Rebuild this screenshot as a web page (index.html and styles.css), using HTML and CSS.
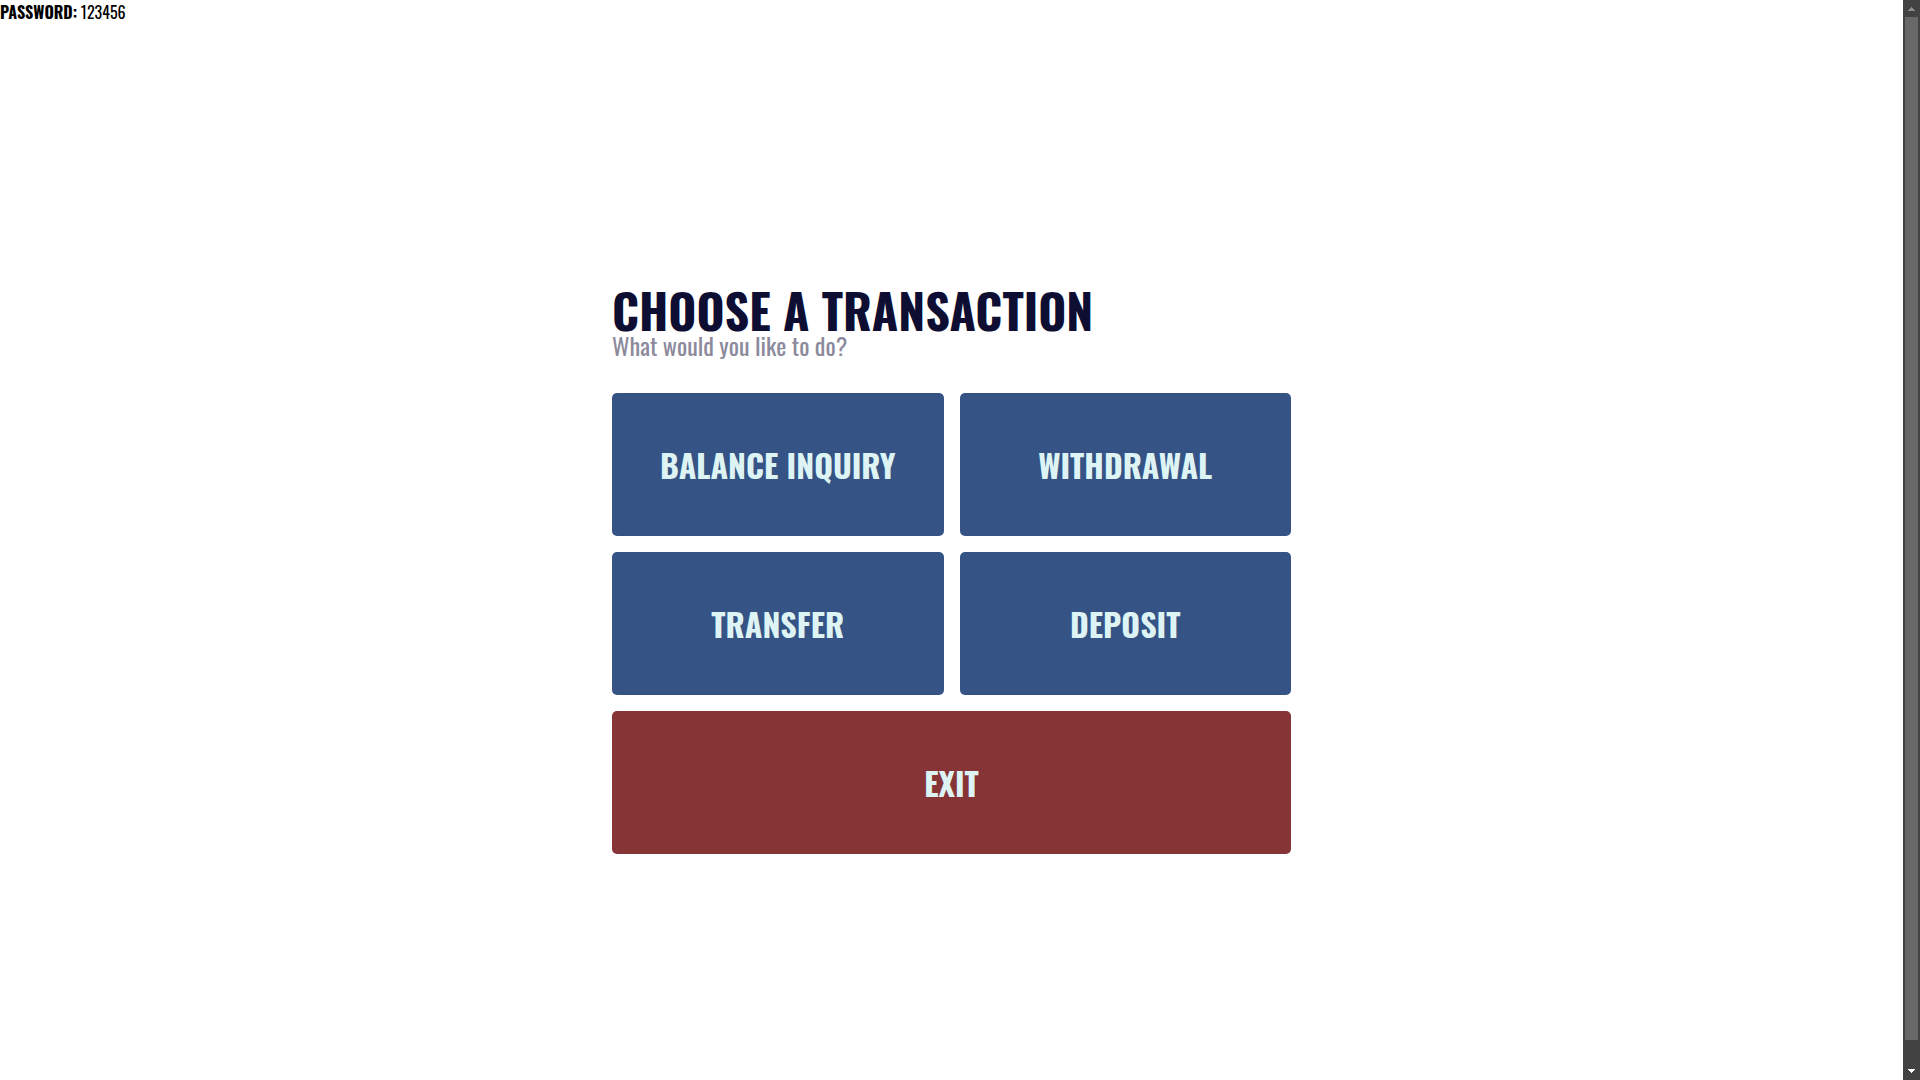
FILE: index.html
```
<!DOCTYPE html>
<html lang="en">
<head>
<meta charset="utf-8">
<title>Choose a transaction</title>
<link rel="stylesheet" href="styles.css">
</head>
<body>
<div class="viewport">
  <div class="page">
    <p class="hint"><strong>PASSWORD:</strong> 123456</p>
    <main class="screen">
      <div class="panel">
        <header class="intro">
          <h1 class="title">CHOOSE A TRANSACTION</h1>
          <p class="subtitle">What would you like to do?</p>
        </header>
        <div class="actions">
          <button class="action" type="button">BALANCE INQUIRY</button>
          <button class="action" type="button">WITHDRAWAL</button>
          <button class="action" type="button">TRANSFER</button>
          <button class="action" type="button">DEPOSIT</button>
          <button class="action action-exit" type="button">EXIT</button>
        </div>
      </div>
    </main>
  </div>
  <div class="scrollbar" aria-hidden="true">
    <svg class="arrow" viewBox="0 0 17 17"><path d="M8 7h1v1h1v1h1v1h1v1H5v-1h1V9h1V8h1z" fill="#8a8a8a"/></svg>
    <div class="track"><div class="thumb"></div></div>
    <svg class="arrow" viewBox="0 0 17 17"><path d="M5 6h7v1h-1v1h-1v1H9v1H8V9H7V8H6V7H5z" fill="#fff"/></svg>
  </div>
</div>
</body>
</html>
```
FILE: styles.css
```
* {
  box-sizing: border-box;
  margin: 0;
}

body {
  background: #fff;
  color: #000;
  font-family: Oswald, "Liberation Sans Narrow", "Arial Narrow", "Liberation Sans", sans-serif;
  font-size: 16px;
  line-height: 24px;
}

.viewport {
  display: flex;
  height: 100vh;
  overflow: hidden;
}

.page {
  flex: 1;
  overflow: hidden;
}

.screen {
  display: flex;
  align-items: center;
  justify-content: center;
  min-height: 100vh;
}

.panel {
  width: 100%;
  max-width: 679px;
  padding-top: 12px;
}

.intro {
  margin-bottom: 37px;
}

.title {
  color: #0e0e33;
  font-size: 48px;
  font-weight: 700;
  line-height: 48px;
}

.subtitle {
  color: #8c8a9c;
  font-size: 24px;
  line-height: 22px;
}

.actions {
  display: grid;
  grid-template-columns: 1fr 1fr;
  gap: 16px;
}

.action {
  padding: 48px 16px;
  border: 0;
  border-radius: 5px;
  background: #355384;
  color: #def3f4;
  font-family: inherit;
  font-size: 32px;
  font-weight: 700;
  line-height: 47px;
  cursor: pointer;
}

.action-exit {
  grid-column: 1 / -1;
  background: #863436;
}

.scrollbar {
  display: flex;
  flex-direction: column;
  width: 17px;
  background: #424242;
}

.arrow {
  width: 17px;
  height: 17px;
}

.track {
  flex: 1;
  padding: 0 2px;
}

.thumb {
  height: calc(100% - 23px);
  background: #686868;
}
```
